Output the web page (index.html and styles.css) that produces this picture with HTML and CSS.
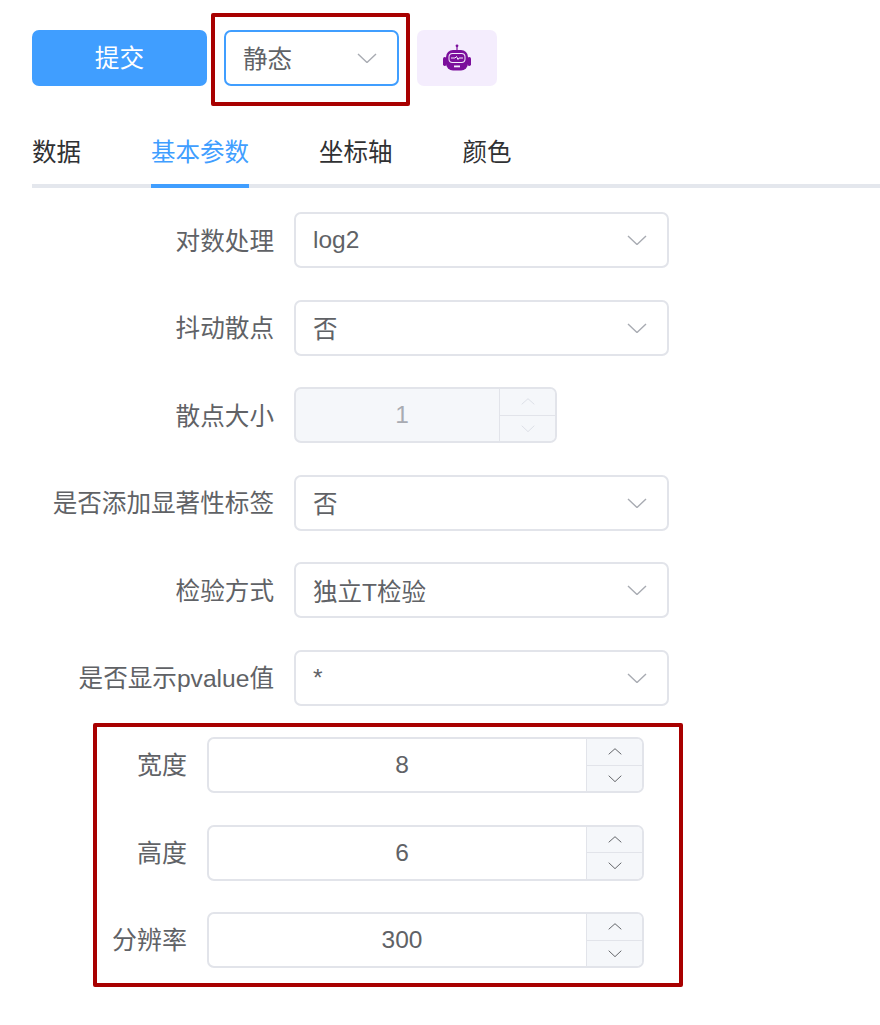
FILE: index.html
```html
<!DOCTYPE html>
<html>
<head>
    <meta charset="UTF-8">
    <link rel="stylesheet" href="styles.css">
</head>
<body>
    <svg class="icon-defs" width="0" height="0">
        <symbol id="down" viewBox="0 0 20 10"><path d="M1 1l9 8.500 9-8.500" fill="none" stroke="currentColor" stroke-width="1.400"/></symbol>
        <symbol id="up" viewBox="0 0 20 10"><path d="M1 9l9-8 9 8" fill="none" stroke="currentColor" stroke-width="1.400"/></symbol>
    </svg>

    <div class="container">
        <div class="toolbar">
            <button class="submit-btn">提交</button>
            <div class="mode-wrap">
                <div class="select select-active">
                    <span>静态</span>
                    <svg class="arrow"><use href="#down"/></svg>
                </div>
                <div class="mark"></div>
            </div>
            <button class="robot-btn">
                <svg width="28" height="28" viewBox="0 0 28 28">
                    <circle cx="14" cy="1.800" r="1.400" fill="#7b0e9c"/>
                    <rect x="13.400" y="2" width="1.200" height="5" fill="#7b0e9c"/>
                    <rect x="0" y="13" width="3.500" height="9" rx="1.700" fill="#7b0e9c"/>
                    <rect x="24.500" y="13" width="3.500" height="9" rx="1.700" fill="#7b0e9c"/>
                    <rect x="3" y="6" width="22" height="20.500" rx="7" fill="#7b0e9c"/>
                    <rect x="5.500" y="9" width="17" height="10" rx="4" fill="#f4edfd"/>
                    <rect x="6.500" y="10" width="15" height="8" rx="3" fill="#7b0e9c"/>
                    <path d="M8 14h4l1.500-1.500 1.500 3 1-1.500h4" fill="none" stroke="#f4edfd" stroke-width="1"/>
                    <rect x="11" y="21.500" width="6" height="1.800" fill="#f4edfd"/>
                </svg>
            </button>
        </div>

        <div class="tabs">
            <div class="tab">数据</div>
            <div class="tab tab-active">基本参数</div>
            <div class="tab">坐标轴</div>
            <div class="tab">颜色</div>
        </div>

        <div class="form">
            <div class="row">
                <label class="row-label">对数处理</label>
                <div class="select"><span>log2</span><svg class="arrow"><use href="#down"/></svg></div>
            </div>
            <div class="row">
                <label class="row-label">抖动散点</label>
                <div class="select"><span>否</span><svg class="arrow"><use href="#down"/></svg></div>
            </div>
            <div class="row">
                <label class="row-label">散点大小</label>
                <div class="number number-small number-disabled">
                    <div class="number-value">1</div>
                    <div class="spin">
                        <div class="spin-btn"><svg class="chevron"><use href="#up"/></svg></div>
                        <div class="spin-btn"><svg class="chevron"><use href="#down"/></svg></div>
                    </div>
                </div>
            </div>
            <div class="row">
                <label class="row-label">是否添加显著性标签</label>
                <div class="select"><span>否</span><svg class="arrow"><use href="#down"/></svg></div>
            </div>
            <div class="row">
                <label class="row-label">检验方式</label>
                <div class="select"><span>独立T检验</span><svg class="arrow"><use href="#down"/></svg></div>
            </div>
            <div class="row">
                <label class="row-label">是否显示pvalue值</label>
                <div class="select"><span>*</span><svg class="arrow"><use href="#down"/></svg></div>
            </div>
        </div>

        <div class="size-box">
            <div class="row">
                <label class="row-label">宽度</label>
                <div class="number">
                    <div class="number-value">8</div>
                    <div class="spin">
                        <div class="spin-btn"><svg class="chevron"><use href="#up"/></svg></div>
                        <div class="spin-btn"><svg class="chevron"><use href="#down"/></svg></div>
                    </div>
                </div>
            </div>
            <div class="row">
                <label class="row-label">高度</label>
                <div class="number">
                    <div class="number-value">6</div>
                    <div class="spin">
                        <div class="spin-btn"><svg class="chevron"><use href="#up"/></svg></div>
                        <div class="spin-btn"><svg class="chevron"><use href="#down"/></svg></div>
                    </div>
                </div>
            </div>
            <div class="row">
                <label class="row-label">分辨率</label>
                <div class="number">
                    <div class="number-value">300</div>
                    <div class="spin">
                        <div class="spin-btn"><svg class="chevron"><use href="#up"/></svg></div>
                        <div class="spin-btn"><svg class="chevron"><use href="#down"/></svg></div>
                    </div>
                </div>
            </div>
        </div>
    </div>
</body>
</html>
```

FILE: styles.css
```css
* {
    box-sizing: border-box;
}

body {
    margin: 0;
    background: #fff;
    font-family: "Liberation Sans", "Noto Sans CJK SC", sans-serif;
    font-size: 24.5px;
    color: #606266;
}

.icon-defs {
    display: block;
    position: absolute;
}

.container {
    padding: 30px 0 0 32px;
}

.toolbar {
    display: flex;
    gap: 17px;
    height: 56px;
}

.submit-btn {
    width: 175px;
    height: 56px;
    padding: 0 0 5px;
    background: #409eff;
    color: #fff;
    border: none;
    border-radius: 7px;
    font: inherit;
    font-size: 24.7px;
}

.mode-wrap {
    position: relative;
    width: 175px;
    margin-right: 1px;
}

.mark {
    position: absolute;
    top: -17px;
    left: -13px;
    width: 199px;
    height: 93px;
    border: 4px solid #a80000;
    border-radius: 2px;
}

.robot-btn {
    display: flex;
    align-items: center;
    justify-content: center;
    width: 80px;
    height: 56px;
    padding: 0;
    background: #f4edfd;
    border: none;
    border-radius: 7px;
}

.tabs {
    display: flex;
    gap: 70px;
    height: 70px;
    margin-top: 32px;
    border-bottom: 4px solid #e4e7ed;
}

.tab {
    height: 70px;
    padding-top: 16px;
    line-height: 38px;
    color: #303133;
}

.tab-active {
    color: #409eff;
    border-bottom: 4px solid #409eff;
}

.form {
    display: flex;
    flex-direction: column;
    gap: 31.5px;
    margin-top: 24px;
}

.row {
    display: flex;
    align-items: center;
    gap: 20px;
    height: 56px;
}

.row-label {
    width: 242px;
    padding-bottom: 3px;
    font-size: 24.6px;
    text-align: right;
    white-space: nowrap;
}

.select {
    display: flex;
    align-items: center;
    justify-content: space-between;
    width: 375px;
    height: 56px;
    padding: 0 20px 0 17px;
    background: #fff;
    border: 2px solid #e2e4ea;
    border-radius: 7px;
}

.select-active {
    width: 175px;
    border-color: #409eff;
}

.select-active span {
    padding-bottom: 2px;
}

.arrow {
    width: 20px;
    height: 10px;
    color: #a8abb2;
}

.number {
    display: flex;
    width: 437px;
    height: 56px;
    border: 2px solid #e2e4ea;
    border-radius: 7px;
    overflow: hidden;
}

.number-small {
    width: 263px;
}

.number-value {
    flex: 1;
    padding-left: 9px;
    line-height: 51px;
    text-align: center;
}

.spin {
    display: flex;
    flex-direction: column;
    width: 56px;
    background: #f5f7fa;
    border-left: 1px solid #e2e4ea;
}

.spin-btn {
    display: flex;
    flex: 1;
    align-items: center;
    justify-content: center;
    color: #606266;
}

.spin-btn + .spin-btn {
    border-top: 1px solid #e2e4ea;
}

.chevron {
    width: 14px;
    height: 7px;
}

.number-disabled {
    background: #f5f7fa;
}

.number-disabled .number-value {
    color: #a8abb2;
}

.number-disabled .spin-btn {
    color: #dcdfe6;
}

.size-box {
    display: flex;
    flex-direction: column;
    gap: 31.5px;
    width: 590px;
    height: 264px;
    margin: 17.5px 0 0 61px;
    padding-top: 10px;
    border: 4px solid #a80000;
    border-radius: 2px;
}

.size-box .row-label {
    width: 90px;
    padding-bottom: 4px;
    font-size: 25px;
}
```
